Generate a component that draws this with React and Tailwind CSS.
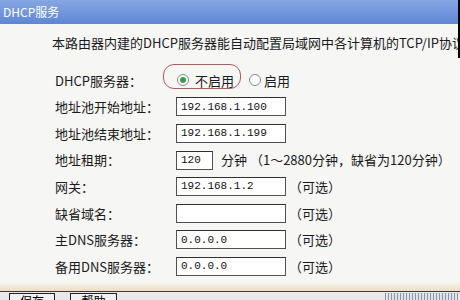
import React from 'react';

const cn = '"Noto Sans CJK SC", "Noto Sans", sans-serif';

function Radio({ checked }) {
  return (
    <span className="w-[12px] h-[12px] shrink-0 rounded-full border border-[#7a8a9a] bg-white flex items-center justify-center">
      {checked && <span className="w-[6px] h-[6px] rounded-full bg-[#3f9c3f]" />}
    </span>
  );
}

function Field({ value, width = 'w-[110px]' }) {
  return (
    <div
      className={`${width} h-[19px] border border-[#505050] border-t-[#303030] bg-white flex items-center pl-[4px] text-[11px] text-[#111]`}
      style={{ fontFamily: '"Liberation Mono", monospace' }}
    >
      {value}
    </div>
  );
}

function Row({ label, children }) {
  return (
    <div className="h-[26.6px] flex items-center">
      <div className="w-[121px] text-[13px] text-[#1a1a1a]">{label}</div>
      <div className="flex items-center gap-[8px] text-[13px] text-[#1a1a1a]">{children}</div>
    </div>
  );
}

export default function App() {
  const rows = [
    { label: '地址池开始地址：', value: '192.168.1.100' },
    { label: '地址池结束地址：', value: '192.168.1.199' },
  ];
  const rows2 = [
    { label: '网关：', value: '192.168.1.2' },
    { label: '缺省域名：', value: '' },
    { label: '主DNS服务器：', value: '0.0.0.0' },
    { label: '备用DNS服务器：', value: '0.0.0.0' },
  ];

  return (
    <div className="w-[460px] h-[300px] overflow-hidden relative bg-[#f6f6f5] flex flex-col" style={{ fontFamily: cn }}>
      <div className="h-[24px] shrink-0 bg-gradient-to-b from-[#86a6e4] to-[#5f86d4] flex items-center pl-[3px] text-[12px] text-white">
        DHCP服务
      </div>
      <div className="absolute right-0 top-0 w-[2px] h-[58px] bg-black" />

      <div className="h-[36px] shrink-0 flex items-center pl-[52px] pt-[1px] text-[13px] text-[#1a1a1a] whitespace-nowrap">
        本路由器内建的DHCP服务器能自动配置局域网中各计算机的TCP/IP协议
      </div>

      <div className="pl-[55px] pt-[7px]">
        <Row label="DHCP服务器：">
          <div className="relative flex items-center">
            <div className="absolute left-[-13px] top-[-7px] w-[78px] h-[25px] rounded-[11px] border border-[#b9575a]" />
            <div className="flex items-center gap-[6px] pl-[1px]">
              <Radio checked />
              <span>不启用</span>
            </div>
            <div className="flex items-center gap-[3px] ml-[15px]">
              <Radio />
              <span>启用</span>
            </div>
          </div>
        </Row>
        {rows.map((r) => (
          <Row key={r.label} label={r.label}>
            <Field value={r.value} />
          </Row>
        ))}
        <Row label="地址租期：">
          <Field value="120" width="w-[37px]" />
          <span className="whitespace-nowrap">分钟 （1～2880分钟，缺省为120分钟）</span>
        </Row>
        {rows2.map((r) => (
          <Row key={r.label} label={r.label}>
            <Field value={r.value} />
            <span className="ml-[-5px]">（可选）</span>
          </Row>
        ))}
      </div>

      <div className="mt-auto h-[9px] shrink-0 bg-gradient-to-b from-[#f6f6f5] to-[#efdcc2]" />
      <div className="h-[1px] shrink-0 bg-[#3a3a3a]" />
      <div className="h-[8px] shrink-0 bg-[#e8e8e8] flex items-start relative">
        <div className="ml-[9px] mt-[1px] w-[46px] h-[14px] border border-[#222] bg-[#f0f0f0] text-[12px] leading-[14px] text-center">保存</div>
        <div className="ml-[15px] mt-[1px] w-[47px] h-[14px] border border-[#222] bg-[#f0f0f0] text-[12px] leading-[14px] text-center">帮助</div>
        <div className="absolute right-[2px] top-[1px] w-[73px] h-[7px] bg-[repeating-linear-gradient(90deg,#8a93a8_0px,#8a93a8_1px,#dfe3ea_1px,#dfe3ea_3px)]" />
      </div>
    </div>
  );
}
